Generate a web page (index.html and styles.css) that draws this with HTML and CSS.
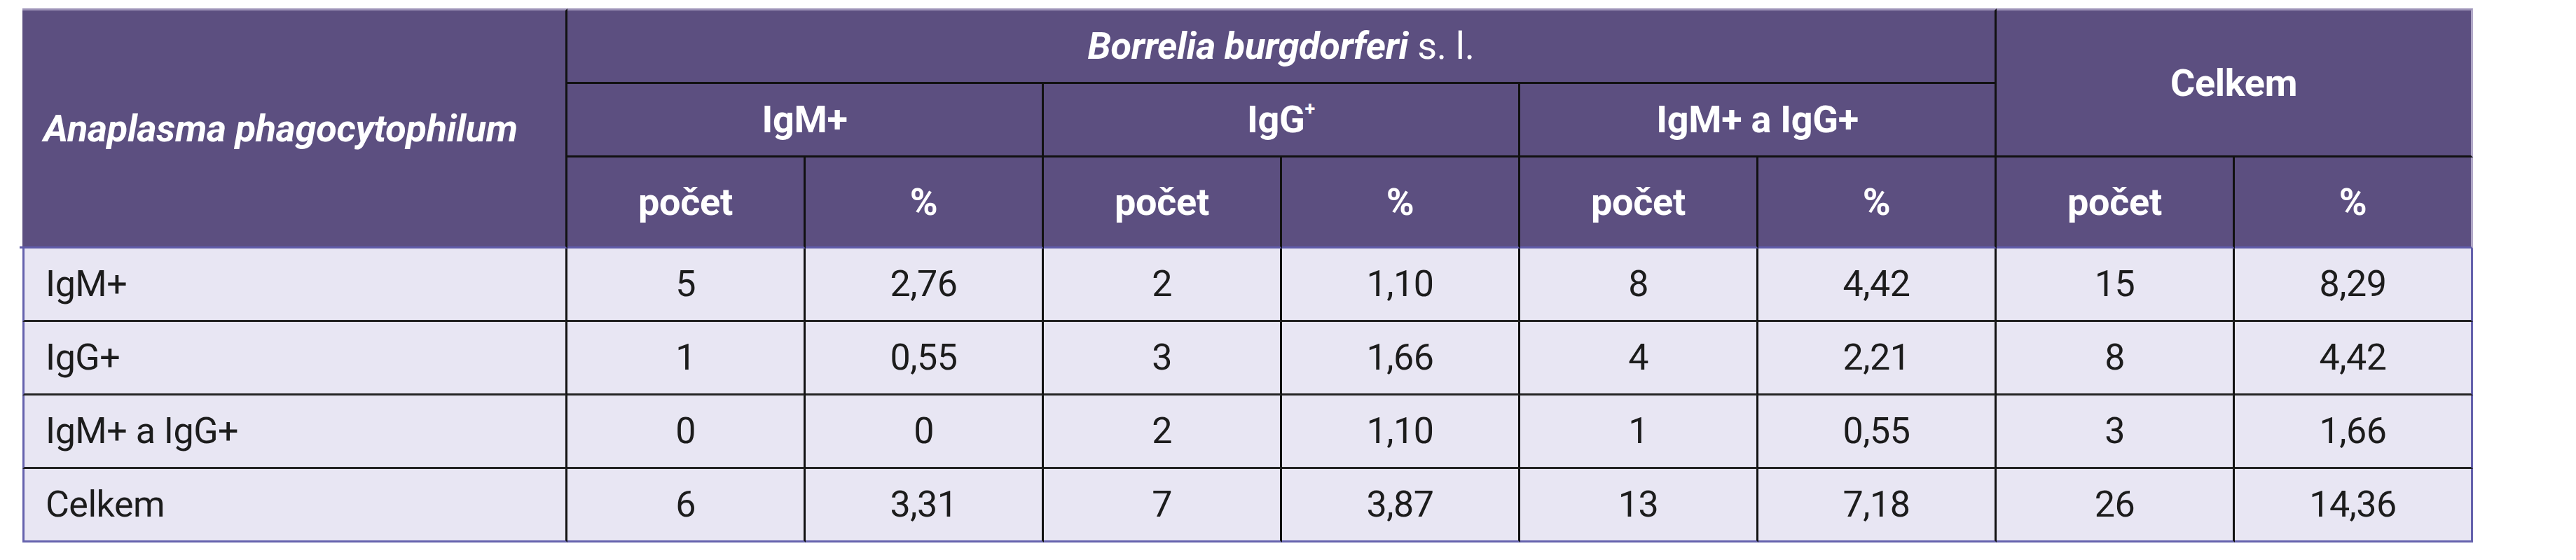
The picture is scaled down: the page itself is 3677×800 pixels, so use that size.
FILE: index.html
```html
<!DOCTYPE html>
<html lang="cs">
<head>
<meta charset="utf-8">
<title>Tabulka</title>
<link rel="stylesheet" href="styles.css">
</head>
<body>
<div class="tbl">
  <div class="c h first top bot-blue it">Anaplasma phagocytophilum</div>
  <div class="c h top bot-dark span6"><i>Borrelia burgdorferi</i>&nbsp;<span class="reg">s. l.</span></div>
  <div class="c h top bot-dark span2 rs2 last-h">Celkem</div>
  <div class="c h bot-dark span2">IgM+</div>
  <div class="c h bot-dark span2">IgG<sup>+</sup></div>
  <div class="c h bot-dark span2">IgM+ a IgG+</div>
  <div class="c h bot-blue">počet</div>
  <div class="c h bot-blue">%</div>
  <div class="c h bot-blue">počet</div>
  <div class="c h bot-blue">%</div>
  <div class="c h bot-blue">počet</div>
  <div class="c h bot-blue">%</div>
  <div class="c h bot-blue">počet</div>
  <div class="c h bot-blue last-h">%</div>

  <div class="c d lab">IgM+</div>
  <div class="c d">5</div><div class="c d">2,76</div>
  <div class="c d">2</div><div class="c d">1,10</div>
  <div class="c d">8</div><div class="c d">4,42</div>
  <div class="c d">15</div><div class="c d last-d">8,29</div>

  <div class="c d lab">IgG+</div>
  <div class="c d">1</div><div class="c d">0,55</div>
  <div class="c d">3</div><div class="c d">1,66</div>
  <div class="c d">4</div><div class="c d">2,21</div>
  <div class="c d">8</div><div class="c d last-d">4,42</div>

  <div class="c d lab">IgM+ a IgG+</div>
  <div class="c d">0</div><div class="c d">0</div>
  <div class="c d">2</div><div class="c d">1,10</div>
  <div class="c d">1</div><div class="c d">0,55</div>
  <div class="c d">3</div><div class="c d last-d">1,66</div>

  <div class="c d lab end">Celkem</div>
  <div class="c d end">6</div><div class="c d end">3,31</div>
  <div class="c d end">7</div><div class="c d end">3,87</div>
  <div class="c d end">13</div><div class="c d end">7,18</div>
  <div class="c d end">26</div><div class="c d end last-d">14,36</div>
</div>
</body>
</html>
```
FILE: styles.css
```css
html, body {
  margin: 0;
  padding: 0;
  background: #ffffff;
}

body {
  width: 3677px;
  height: 800px;
  font-family: Roboto, "Liberation Sans", sans-serif;
}

.tbl {
  display: grid;
  grid-template-columns: 778px repeat(8, 340px);
  grid-template-rows: 108px 105px 130px repeat(4, 105px);
  margin: 12px 0 0 32px;
  width: 3498px;
}

.c {
  box-sizing: border-box;
  display: flex;
  align-items: center;
  justify-content: center;
  line-height: 1;
  white-space: nowrap;
  border-right: 3px solid #111111;
}

.h {
  background: #5c4f80;
  color: #ffffff;
  font-weight: 700;
  font-size: 54px;
  letter-spacing: -0.3px;
}

.first {
  grid-row: span 3;
  justify-content: flex-start;
  padding-left: 30px;
  border-right: 3px solid #111111;
  position: relative;
}

.first::after {
  content: "";
  position: absolute;
  left: -4px;
  bottom: -3px;
  width: 4px;
  height: 3px;
  background: #5f5ba9;
}

.it {
  font-style: italic;
}

.span6 {
  grid-column: span 6;
}

.span2 {
  grid-column: span 2;
}

.rs2 {
  grid-row: span 2;
}

.top {
  border-top: 3px solid #9d93b8;
}

.bot-dark {
  border-bottom: 3px solid #111111;
}

.bot-blue {
  border-bottom: 3px solid #5f5ba9;
}

.last-h {
  border-right: 3px solid #b1a8c8;
}

.reg {
  font-weight: 400;
}

sup {
  font-size: 0.5em;
  line-height: 0;
  position: relative;
  top: -0.55em;
  vertical-align: baseline;
}

.d {
  background: #e8e6f3;
  color: #1c1c1c;
  font-weight: 400;
  font-size: 52px;
  letter-spacing: -0.5px;
  border-bottom: 3px solid #232323;
}

.lab {
  justify-content: flex-start;
  padding-left: 30px;
  border-left: 3px solid #6562ad;
}

.last-d {
  border-right: 3px solid #6562ad;
}

.end {
  border-bottom: 3px solid #6562ad;
}
```
